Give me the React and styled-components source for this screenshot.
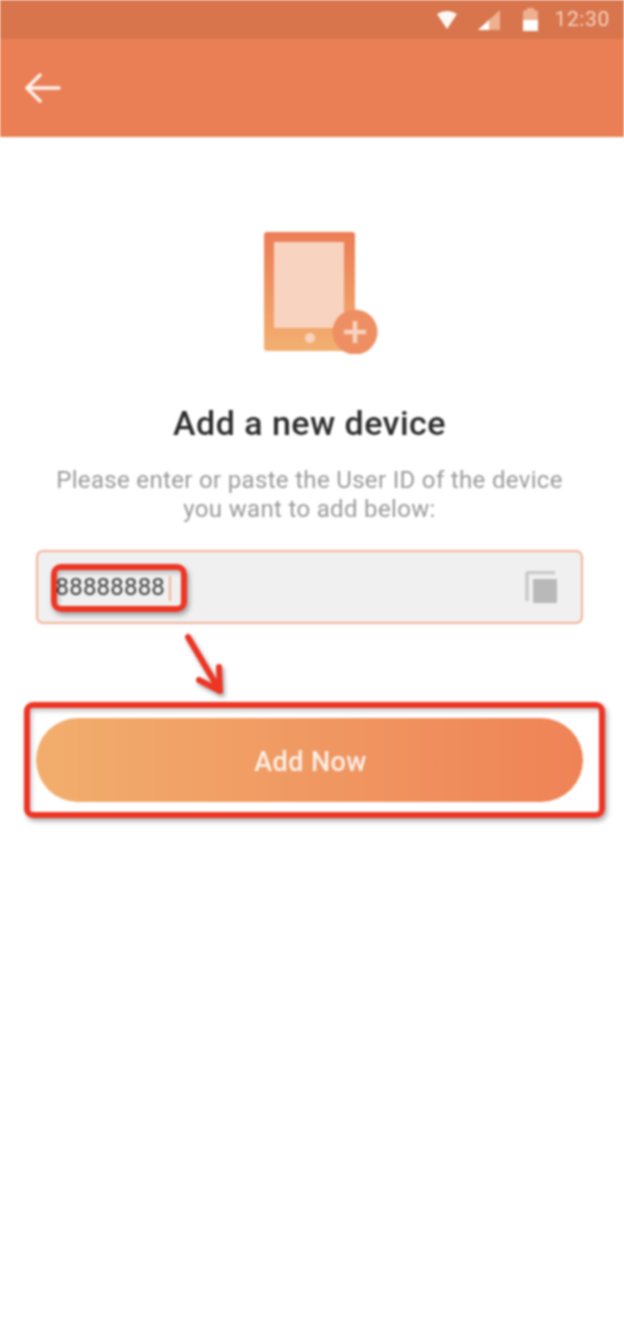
import React from "react";
import styled, { createGlobalStyle } from "styled-components";

const Global = createGlobalStyle`
  html, body { margin: 0; padding: 0; background: #fff; }
  body { font-family: Roboto, "Noto Sans", sans-serif; }
`;

const Page = styled.div`
  width: 624px;
  height: 1324px;
  display: flex;
  flex-direction: column;
  overflow: hidden;
  background: #fff;
  filter: blur(0.8px);
`;

const StatusBar = styled.div`
  height: 39px;
  background: #d8754c;
  display: flex;
  align-items: center;
  justify-content: flex-end;
  padding: 0 14px 0 0;
  color: #f5d3c0;
`;

const StatusIcon = styled.svg`
  display: block;
  margin-right: ${(p) => p.$gap}px;
`;

const Clock = styled.span`
  font-size: 21px;
  line-height: 39px;
  letter-spacing: 0.65px;
`;

const Header = styled.header`
  height: 98px;
  background: #ea7f55;
  display: flex;
  align-items: center;
  padding-left: 25px;
  box-sizing: border-box;
`;

const Content = styled.main`
  display: flex;
  flex-direction: column;
  align-items: center;
  padding: 95px 41px 0 36px;
`;

const Hero = styled.svg`
  display: block;
  margin-left: 22px;
`;

const Title = styled.h1`
  margin: 45px 0 0;
  font-size: 34px;
  line-height: 48px;
  font-weight: 500;
  letter-spacing: 0.45px;
  color: #2e2e2e;
  text-align: center;
  white-space: nowrap;
`;

const Sub = styled.p`
  margin: 19px 0 0;
  font-size: 24px;
  line-height: 29px;
  letter-spacing: 0.33px;
  color: #9a9a9a;
  text-align: center;
  white-space: nowrap;
`;

const Field = styled.div`
  position: relative;
  margin-top: 26px;
  width: 547px;
  height: 74px;
  box-sizing: border-box;
  background: #f0f0f0;
  border: 2.5px solid #f3b295;
  border-radius: 7px;
  display: flex;
  align-items: center;
  justify-content: space-between;
  padding: 0 24.5px 0 17.5px;
`;

const Value = styled.span`
  font-size: 24px;
  line-height: 30px;
  letter-spacing: 0.2px;
  color: #3f3f3f;
`;

const Caret = styled.span`
  display: inline-block;
  width: 2px;
  height: 25px;
  margin-left: 4px;
  background: #f3b295;
  vertical-align: middle;
`;

const AddButton = styled.button`
  position: relative;
  margin-top: 94px;
  width: 547px;
  height: 84px;
  border: 0;
  border-radius: 42px;
  background: linear-gradient(90deg, #f2ae6d 0%, #ef8357 100%);
  color: #fcefe6;
  font-family: inherit;
  font-size: 27px;
  font-weight: 500;
  letter-spacing: 0.4px;
  padding: 3px 0 0 2px;
`;

const Mark = styled.span`
  position: absolute;
  box-sizing: border-box;
  border: 6px solid #ee3524;
  border-radius: ${(p) => p.$radius}px;
  box-shadow: 2px 3px 5px rgba(0, 0, 0, 0.35), inset 2px 3px 4px rgba(0, 0, 0, 0.22);
  pointer-events: none;
`;

const TextMark = styled(Mark)`
  left: 12.5px;
  top: 11.5px;
  width: 136px;
  height: 48px;
`;

const ButtonMark = styled(Mark)`
  left: -12px;
  top: -16px;
  width: 581px;
  height: 116px;
`;

const Arrow = styled.svg`
  position: absolute;
  left: 146px;
  top: -84px;
  overflow: visible;
  filter: drop-shadow(2px 3px 2px rgba(0, 0, 0, 0.35));
`;

export default function App() {
  return (
    <>
      <Global />
      <Page>
        <StatusBar>
          <StatusIcon $gap={21} width="20" height="20" viewBox="0 0 20 20">
            <path d="M0 4 Q10 -2 20 4 L10 19 Z" fill="#fff" opacity="0.95" />
          </StatusIcon>
          <StatusIcon $gap={23} width="22" height="20" viewBox="0 0 22 20">
            <path d="M22 0 V20 H0 Z" fill="#eeb090" />
            <path d="M11 10 V20 H0 Z" fill="#fff" />
          </StatusIcon>
          <StatusIcon $gap={16} width="15" height="23" viewBox="0 0 15 23">
            <path d="M4 1 Q4 0 5 0 H10 Q11 0 11 1 V2 Q15 2 15 4 V23 H0 V4 Q0 2 4 2 Z" fill="#eeb090" />
            <rect x="0" y="12" width="15" height="11" fill="#fff" />
          </StatusIcon>
          <Clock>12:30</Clock>
        </StatusBar>
        <Header>
          <svg width="36" height="32" viewBox="0 0 36 32" fill="none" stroke="#fdf1ea" strokeWidth="3.5" strokeLinecap="round" strokeLinejoin="round">
            <path d="M34 16 H2 M15 3 L2 16 L15 29" />
          </svg>
        </Header>
        <Content>
          <Hero width="114" height="122" viewBox="0 0 114 122">
            <defs>
              <linearGradient id="tablet" x1="0" y1="0" x2="0" y2="1">
                <stop offset="0" stopColor="#ec7d55" />
                <stop offset="1" stopColor="#f3b071" />
              </linearGradient>
            </defs>
            <rect x="0" y="0" width="91" height="119" rx="3" fill="url(#tablet)" />
            <rect x="10" y="10" width="70" height="86" fill="#f8d3c0" />
            <circle cx="46" cy="106" r="5" fill="#f8d3c0" />
            <circle cx="91" cy="100" r="22.5" fill="#ee8f63" />
            <path d="M91 89 V111 M80 100 H102" stroke="#f8d3c0" strokeWidth="4.5" />
          </Hero>
          <Title>Add a new device</Title>
          <Sub>
            Please enter or paste the User ID of the device
            <br />
            you want to add below:
          </Sub>
          <Field>
            <Value>
              88888888
              <Caret />
            </Value>
            <svg width="32" height="32" viewBox="0 0 32 32">
              <path d="M2 30 V3 Q2 1.5 4 1.5 H30" fill="none" stroke="#c9c9c9" strokeWidth="3.5" />
              <rect x="8" y="8" width="24" height="24" fill="#b9b9b9" />
            </svg>
            <TextMark $radius={10} />
          </Field>
          <AddButton>
            Add Now
            <Arrow width="36" height="58" viewBox="0 0 36 58" fill="none" stroke="#ee3524" strokeWidth="6" strokeLinecap="round" strokeLinejoin="round">
              <path d="M6 3 L38 57 M37 33 L38 57 L17 46" />
            </Arrow>
            <ButtonMark $radius={9} />
          </AddButton>
        </Content>
      </Page>
    </>
  );
}
